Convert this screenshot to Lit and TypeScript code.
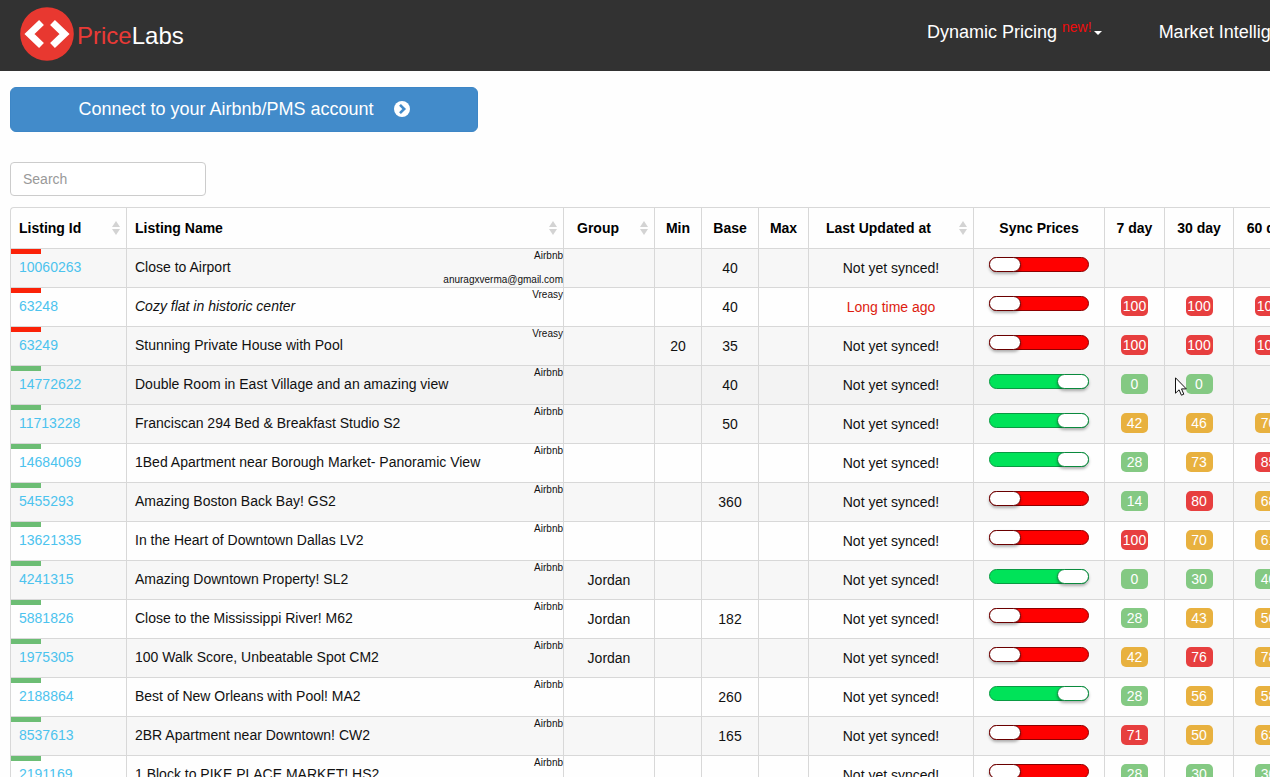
import { LitElement, html, css, svg, nothing } from "lit";
import { customElement, state } from "lit/decorators.js";
import { classMap } from "lit/directives/class-map.js";

interface Listing {
  id: string;
  name: string;
  source: string;
  email?: string;
  italic?: boolean;
  active: boolean;
  group?: string;
  min?: string;
  base?: string;
  max?: string;
  updated: string;
  late?: boolean;
  sync: boolean;
  rates: [number, string][];
}

const L = (
  id: string,
  name: string,
  base: string,
  sync: boolean,
  rates: [number, string][],
  extra: Partial<Listing> = {}
): Listing => ({
  id, name, base, sync, rates,
  source: "Airbnb",
  active: true,
  updated: "Not yet synced!",
  ...extra,
});

const LISTINGS: Listing[] = [
  L("10060263", "Close to Airport", "40", false, [], { active: false, email: "anuragxverma@gmail.com" }),
  L("63248", "Cozy flat in historic center", "40", false, [[100, "high"], [100, "high"], [100, "high"]],
    { active: false, source: "Vreasy", italic: true, updated: "Long time ago", late: true }),
  L("63249", "Stunning Private House with Pool", "35", false, [[100, "high"], [100, "high"], [100, "high"]],
    { active: false, source: "Vreasy", min: "20" }),
  L("14772622", "Double Room in East Village and an amazing view", "40", true, [[0, "low"], [0, "low"]]),
  L("11713228", "Franciscan 294 Bed & Breakfast Studio S2", "50", true, [[42, "mid"], [46, "mid"], [70, "mid"]]),
  L("14684069", "1Bed Apartment near Borough Market- Panoramic View", "", true, [[28, "low"], [73, "mid"], [85, "high"]]),
  L("5455293", "Amazing Boston Back Bay! GS2", "360", false, [[14, "low"], [80, "high"], [68, "mid"]]),
  L("13621335", "In the Heart of Downtown Dallas LV2", "", false, [[100, "high"], [70, "mid"], [61, "mid"]]),
  L("4241315", "Amazing Downtown Property! SL2", "", true, [[0, "low"], [30, "low"], [40, "low"]], { group: "Jordan" }),
  L("5881826", "Close to the Mississippi River! M62", "182", false, [[28, "low"], [43, "mid"], [50, "mid"]], { group: "Jordan" }),
  L("1975305", "100 Walk Score, Unbeatable Spot CM2", "", false, [[42, "mid"], [76, "high"], [78, "mid"]], { group: "Jordan" }),
  L("2188864", "Best of New Orleans with Pool! MA2", "260", true, [[28, "low"], [56, "mid"], [58, "mid"]]),
  L("8537613", "2BR Apartment near Downtown! CW2", "165", false, [[71, "high"], [50, "mid"], [63, "mid"]]),
  L("2191169", "1 Block to PIKE PLACE MARKET! HS2", "", false, [[28, "low"], [30, "low"], [30, "low"]]),
];

const sorter = svg`
  <svg class="sorter" viewBox="0 0 8 14" width="8" height="14" aria-hidden="true">
    <path d="M4 0L8 6H0zM4 14L0 8H8z" fill="#d3d3d3"/>
  </svg>`;

@customElement("app-root")
export class AppRoot extends LitElement {
  @state() private query = "";

  static styles = css`
    :host {
      display: block;
      height: 100vh;
      overflow: hidden;
      background: #fefefe;
      color: #111;
      font: 14px/20px "Liberation Sans", Arial, sans-serif;
    }
    *, *::before { box-sizing: border-box; }
    a { text-decoration: none; }
    .bar {
      display: flex;
      align-items: flex-start;
      justify-content: space-between;
      height: 71px;
      padding-left: 20px;
      background: #323232;
    }
    .brand {
      display: flex;
      gap: 3px;
      padding-top: 7px;
      color: #fff;
      font-size: 24px;
      line-height: 58px;
    }
    .brand svg { flex: none; }
    .brand em { color: #e93a36; font-style: normal; }
    .links {
      display: flex;
      flex: none;
      gap: 57px;
      width: 343px;
      padding-top: 22px;
      font-size: 18px;
      line-height: 20px;
      white-space: nowrap;
    }
    .links a { display: flex; flex: none; color: #fff; }
    .new {
      margin-left: 5px;
      color: #f00c0c;
      font-size: 14px;
      line-height: 10px;
    }
    .caret {
      align-self: center;
      margin: 2px 0 0 2px;
      border: 4px solid transparent;
      border-top-color: #fff;
      border-bottom: 0;
    }
    .content {
      display: flex;
      flex-direction: column;
      align-items: flex-start;
      padding: 16px 0 0 10px;
    }
    .connect {
      display: flex;
      align-items: center;
      justify-content: center;
      gap: 20px;
      width: 468px;
      height: 45px;
      padding: 0 0 2px;
      border: 1px solid #3d86c6;
      border-radius: 6px;
      background: #428bca;
      color: #fff;
      font: 18px/24px "Liberation Sans", Arial, sans-serif;
    }
    .search {
      width: 196px;
      height: 34px;
      margin: 30px 0 11px;
      padding: 6px 12px;
      border: 1px solid #ccc;
      border-radius: 4px;
      background: #fff;
      color: #555;
      font: 14px/20px "Liberation Sans", Arial, sans-serif;
    }
    .search::placeholder { color: #999; opacity: 1; }
    table {
      table-layout: fixed;
      width: 1294px;
      border: 1px solid #d8d8d8;
      border-width: 0 1px 1px 0;
      border-radius: 4px 0 0 0;
      border-spacing: 0;
    }
    .c-id { width: 116px; }
    .c-group { width: 91px; }
    .c-min { width: 47px; }
    .c-base { width: 57px; }
    .c-max { width: 50px; }
    .c-updated { width: 165px; }
    .c-sync { width: 131px; }
    .c-d7 { width: 60px; }
    .c-d30 { width: 69px; }
    .c-d60 { width: 70px; }
    th, td {
      padding: 0;
      border: 1px solid #d8d8d8;
      border-width: 1px 0 0 1px;
      text-align: center;
      vertical-align: top;
      white-space: nowrap;
    }
    th { color: #000; font-weight: bold; line-height: 40px; }
    th:first-child { border-top-left-radius: 4px; }
    .head { display: flex; align-items: center; justify-content: center; }
    .head.sortable { justify-content: space-between; padding: 0 6px 0 13px; }
    .head.left { padding-left: 8px; }
    .head.wide { padding-left: 17px; }
    td { height: 39px; line-height: 22px; padding-top: 8px; }
    tbody tr:nth-child(odd) { background: #f7f7f7; }
    tbody tr.hovered { background: #f3f3f3; }
    td.id { padding: 0; text-align: left; line-height: 20px; }
    .status { width: 30px; height: 5px; margin-bottom: 3px; background: #fb2208; }
    .status.on { background: #6cbd74; }
    .id a { padding-left: 8px; color: #4cc3ee; }
    td.name { padding: 0; }
    .listing { display: flex; justify-content: space-between; height: 38px; }
    .title { padding: 8px 0 0 8px; line-height: 20px; }
    .title.italic { font-style: italic; }
    .meta {
      display: flex;
      flex-direction: column;
      justify-content: space-between;
      font-size: 10px;
      line-height: 14px;
      text-align: right;
    }
    .late { color: #dd1c10; }
    .switch {
      appearance: none;
      display: block;
      width: 100px;
      height: 15px;
      margin: 0 auto;
      border: 1px solid #8e0000;
      border-radius: 8px;
      background: #f00;
    }
    .switch::before {
      content: "";
      display: block;
      width: 32px;
      height: 15px;
      margin: -1px;
      border: 1px solid #6a0000;
      border-radius: 8px;
      background: #fff;
      box-shadow: 0 2px 3px rgba(0, 0, 0, 0.3);
    }
    .switch:checked { border-color: #0a9a43; background: #00e359; }
    .switch:checked::before { margin-left: 67px; border-color: #0a8a3d; }
    .rate {
      display: block;
      width: 27px;
      height: 20px;
      margin: 0 auto;
      border-radius: 5px;
      color: #fff;
      line-height: 21px;
    }
    .low { background: #84c983; }
    .mid { background: #e8b13f; }
    .high { background: #e73f3f; }
    .pointer { position: absolute; left: 1175px; top: 377px; }
  `;

  private onSearch(e: Event) {
    this.query = (e.target as HTMLInputElement).value.toLowerCase();
  }

  private renderRow(r: Listing) {
    return html`
      <tr class=${classMap({ hovered: r.id === "14772622" })}>
        <td class="id">
          <div class=${classMap({ status: true, on: r.active })}></div>
          <a href="#${r.id}">${r.id}</a>
        </td>
        <td class="name">
          <div class="listing">
            <span class=${classMap({ title: true, italic: !!r.italic })}>${r.name}</span>
            <span class="meta"><span>${r.source}</span>${r.email ? html`<span>${r.email}</span>` : nothing}</span>
          </div>
        </td>
        <td>${r.group}</td>
        <td>${r.min}</td>
        <td>${r.base}</td>
        <td>${r.max}</td>
        <td class=${classMap({ late: !!r.late })}>${r.updated}</td>
        <td><input class="switch" type="checkbox" role="switch" aria-label="Sync prices" .checked=${r.sync}></td>
        ${[0, 1, 2].map((i) => html`<td>${r.rates[i]
          ? html`<span class="rate ${r.rates[i][1]}">${r.rates[i][0]}</span>` : nothing}</td>`)}
      </tr>`;
  }

  render() {
    const rows = LISTINGS.filter((r) => (r.id + " " + r.name).toLowerCase().includes(this.query));
    return html`
      <header class="bar">
        <a class="brand" href="#">
          <svg width="54" height="54" viewBox="0 0 54 54" aria-hidden="true">
            <circle cx="27" cy="27" r="26.8" fill="#e83830"/>
            <path d="M21.5 15.5L9.5 27L21.5 38.5M32.5 15.5L44.5 27L32.5 38.5" fill="none" stroke="#fff" stroke-width="7"/>
          </svg>
          <span><em>Price</em>Labs</span>
        </a>
        <nav class="links">
          <a href="#pricing">Dynamic Pricing<span class="new">new!</span><span class="caret"></span></a>
          <a href="#market">Market Intelligence</a>
        </nav>
      </header>
      <main class="content">
        <button class="connect" type="button">
          Connect to your Airbnb/PMS account
          <svg width="16" height="16" viewBox="0 0 16 16" aria-hidden="true">
            <circle cx="8" cy="8" r="8" fill="#fff"/>
            <path d="M6 3.8L10.2 8L6 12.2" fill="none" stroke="#428bca" stroke-width="2.6"/>
          </svg>
        </button>
        <input class="search" type="text" placeholder="Search" aria-label="Search" @input=${this.onSearch}>
        <table>
          <colgroup>
            <col class="c-id"><col><col class="c-group"><col class="c-min"><col class="c-base"><col class="c-max">
            <col class="c-updated"><col class="c-sync"><col class="c-d7"><col class="c-d30"><col class="c-d60">
          </colgroup>
          <thead>
            <tr>
              <th><div class="head sortable left">Listing Id${sorter}</div></th>
              <th><div class="head sortable left">Listing Name${sorter}</div></th>
              <th><div class="head sortable">Group${sorter}</div></th>
              <th>Min</th>
              <th>Base</th>
              <th>Max</th>
              <th><div class="head sortable wide">Last Updated at${sorter}</div></th>
              <th>Sync Prices</th>
              <th>7 day</th>
              <th>30 day</th>
              <th>60 day</th>
            </tr>
          </thead>
          <tbody>${rows.map((r) => this.renderRow(r))}</tbody>
        </table>
      </main>
      <svg class="pointer" width="12" height="20" viewBox="0 0 12 20" aria-hidden="true">
        <path d="M.5 .8V16.2L4.1 12.8L6.4 18.2L8.8 17.2L6.5 11.9H11.3Z" fill="#fff" stroke="#111"/>
      </svg>`;
  }
}
